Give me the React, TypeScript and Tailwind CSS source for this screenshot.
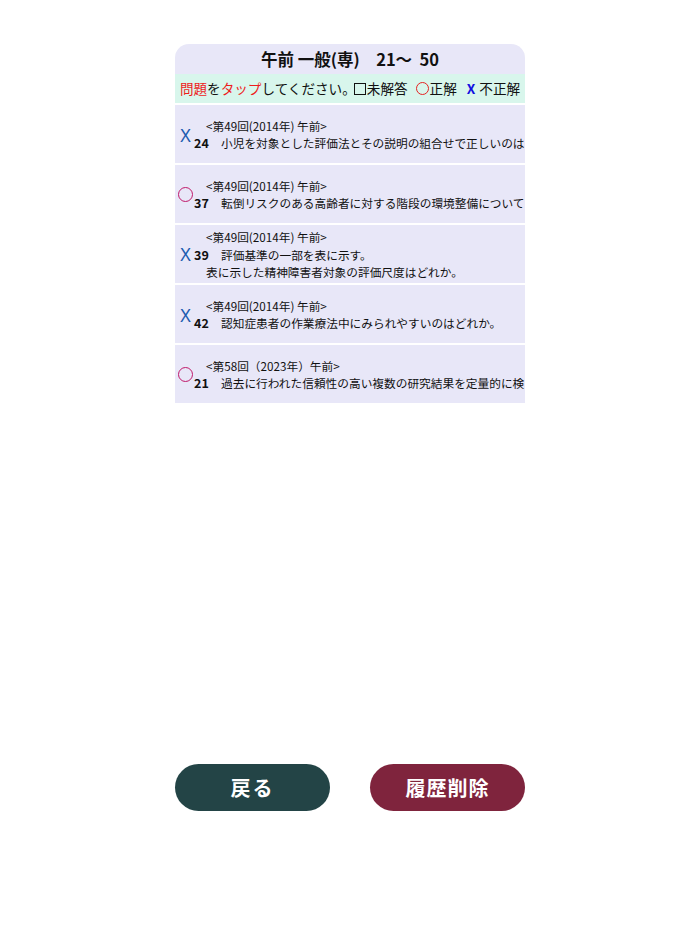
import React from "react";

type Mark = "x" | "o";

type Item = {
  mark: Mark;
  round: string;
  no: number;
  text: string;
  more?: string;
};

// 本文は一覧の幅で切れるので、見えている分だけ持つ
const items: Item[] = [
  { mark: "x", round: "<第49回(2014年) 午前>", no: 24, text: "小児を対象とした評価法とその説明の組合せで正しいのは" },
  { mark: "o", round: "<第49回(2014年) 午前>", no: 37, text: "転倒リスクのある高齢者に対する階段の環境整備について" },
  { mark: "x", round: "<第49回(2014年) 午前>", no: 39, text: "評価基準の一部を表に示す。", more: "表に示した精神障害者対象の評価尺度はどれか。" },
  { mark: "x", round: "<第49回(2014年) 午前>", no: 42, text: "認知症患者の作業療法中にみられやすいのはどれか。" },
  { mark: "o", round: "<第58回（2023年）午前>", no: 21, text: "過去に行われた信頼性の高い複数の研究結果を定量的に検" },
];

function MarkIcon({ mark }: { mark: Mark }) {
  if (mark === "x") {
    return (
      <span className="text-[18px] leading-none text-[#1c5cb0] font-['Noto_Sans',sans-serif]">X</span>
    );
  }
  return <span className="block w-[15px] h-[15px] rounded-full border-[1.5px] border-[#c0186a]" />;
}

function Row({ item }: { item: Item }) {
  const raised = !item.more;
  return (
    <li className="h-[58px] bg-[#e8e7f8] flex flex-col justify-center overflow-hidden whitespace-nowrap text-[11.7px] leading-[17px] text-[#111]">
      <p className="pl-[31px]">{item.round}</p>
      <div className="flex items-center">
        <span className={`w-[19px] shrink-0 flex justify-center pl-[2px] ${raised ? "-translate-y-[8px]" : ""}`}>
          <MarkIcon mark={item.mark} />
        </span>
        <span className="w-[27px] shrink-0 font-bold text-[12.5px]">{item.no}</span>
        <span className="min-w-0">{item.text}</span>
      </div>
      {item.more && <p className="pl-[31px]">{item.more}</p>}
    </li>
  );
}

export default function App() {
  return (
    <main
      className="min-h-[934px] bg-white flex flex-col items-center pt-[44px]"
      style={{ fontFamily: '"Noto Sans CJK JP", "Noto Sans", sans-serif' }}
    >
      <section className="w-[350px]">
        <header className="h-[30px] bg-[#e8e7f8] rounded-t-[14px] flex items-center justify-center text-[16.5px] font-bold text-[#111] whitespace-pre">
          午前 一般(専)　21〜  50
        </header>
        <p className="h-[29px] bg-[#d8f6ec] flex items-center justify-center text-[13.6px] text-[#111] whitespace-nowrap">
          <span className="text-[#ee1c1c]">問題</span>を<span className="text-[#ee1c1c]">タップ</span>してください。
          <span className="ml-[-2px] mr-[1px] w-[12px] h-[12px] border-[1.5px] border-[#111]" />
          未解答
          <span className="ml-[8px] mr-[1px] w-[13px] h-[13px] rounded-full border-[1.5px] border-[#e52222]" />
          正解
          <span className="ml-[10px] mr-[4px] text-[#1010e0] font-bold">X</span>不正解
        </p>
        <ul className="mt-[2px] flex flex-col gap-[2px]">
          {items.map((it) => (
            <Row key={it.no} item={it} />
          ))}
        </ul>
      </section>

      <div className="mt-[361px] flex gap-[40px]">
        <button className="w-[155px] h-[47px] rounded-full bg-[#234446] text-white text-[20px] font-bold tracking-[2px]">
          戻る
        </button>
        <button className="w-[155px] h-[47px] rounded-full bg-[#7f243d] text-white text-[20px] font-bold tracking-[1px]">
          履歴削除
        </button>
      </div>
    </main>
  );
}
